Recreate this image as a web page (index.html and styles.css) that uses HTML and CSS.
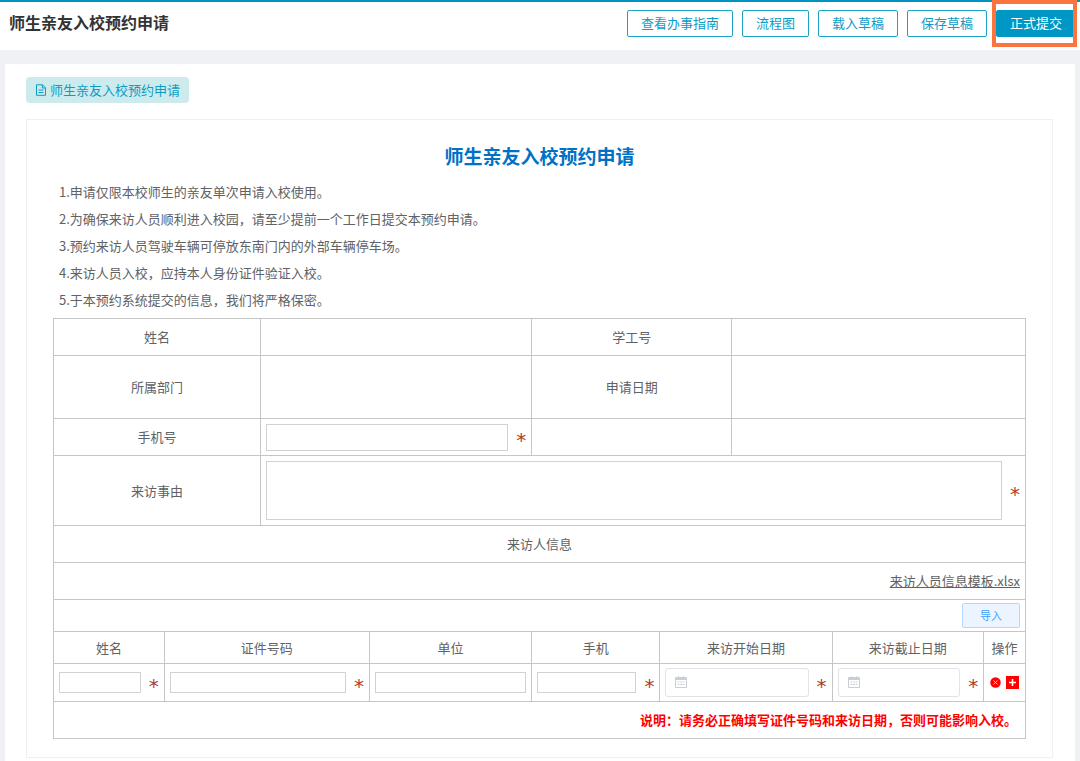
FILE: index.html
```html
<!DOCTYPE html>
<html lang="zh-CN">
<head>
<meta charset="utf-8">
<title>师生亲友入校预约申请</title>
<link rel="stylesheet" href="styles.css">
</head>
<body>
<svg class="defs" aria-hidden="true">
  <symbol id="calendar" viewBox="0 0 12 12">
    <path d="M.5 1.500h11v10h-11z" fill="none" stroke="currentColor"/>
    <path d="M.5 3h11" fill="none" stroke="currentColor" stroke-width="2"/>
    <path d="M3.500 .3v2M8.500 .3v2" fill="none" stroke="currentColor"/>
    <path d="M2.500 6h7M2.500 8.500h7" fill="none" stroke="currentColor" stroke-dasharray="1.800 .8"/>
  </symbol>
</svg>
<header class="topbar">
  <h1 class="topbar-title">师生亲友入校预约申请</h1>
  <div class="actions">
    <button class="btn" type="button">查看办事指南</button>
    <button class="btn" type="button">流程图</button>
    <button class="btn" type="button">载入草稿</button>
    <button class="btn" type="button">保存草稿</button>
    <div class="marked"><button class="btn primary" type="submit" form="apply">正式提交</button></div>
  </div>
</header>
<main class="card">
  <div class="tab">
    <svg class="tab-icon" viewBox="0 0 12 12" aria-hidden="true"><path d="M1.500 .8h6l3 3v7.500h-9zM7.300 .8v3.200h3.200M3.500 6h5M3.500 8.500h5" fill="none" stroke="currentColor"/></svg>
    <span>师生亲友入校预约申请</span>
  </div>
  <form class="panel" id="apply">
    <h2 class="form-title">师生亲友入校预约申请</h2>
    <div class="notes">
      <p>1.申请仅限本校师生的亲友单次申请入校使用。</p>
      <p>2.为确保来访人员顺利进入校园，请至少提前一个工作日提交本预约申请。</p>
      <p>3.预约来访人员驾驶车辆可停放东南门内的外部车辆停车场。</p>
      <p>4.来访人员入校，应持本人身份证件验证入校。</p>
      <p>5.于本预约系统提交的信息，我们将严格保密。</p>
    </div>
    <table class="grid info">
      <colgroup><col class="c-label"><col class="c-value"><col class="c-label2"><col></colgroup>
      <tr class="row"><th>姓名</th><td></td><th>学工号</th><td></td></tr>
      <tr class="row-dept"><th>所属部门</th><td></td><th>申请日期</th><td></td></tr>
      <tr class="row"><th><label for="phone">手机号</label></th><td><div class="field"><input class="input tall" id="phone" type="tel"><span class="star">*</span></div></td><td></td><td></td></tr>
      <tr class="row-reason"><th><label for="reason">来访事由</label></th><td colspan="3"><div class="field"><textarea class="input area" id="reason"></textarea><span class="star">*</span></div></td></tr>
      <tr class="row"><th colspan="4">来访人信息</th></tr>
      <tr class="row"><td colspan="4" class="right"><a class="file" href="#">来访人员信息模板.xlsx</a></td></tr>
    </table>
    <table class="grid visitors">
      <colgroup><col class="v-name"><col class="v-id"><col class="v-unit"><col class="v-phone"><col class="v-start"><col class="v-end"><col></colgroup>
      <tr class="row-import"><td colspan="7" class="right"><button class="import" type="button">导入</button></td></tr>
      <tr class="row-head"><th>姓名</th><th>证件号码</th><th>单位</th><th>手机</th><th>来访开始日期</th><th>来访截止日期</th><th class="ops-head">操作</th></tr>
      <tr class="row-entry">
        <td><div class="field"><input class="input" type="text" aria-label="姓名"><span class="star">*</span></div></td>
        <td><div class="field"><input class="input" type="text" aria-label="证件号码"><span class="star">*</span></div></td>
        <td><div class="field"><input class="input" type="text" aria-label="单位"></div></td>
        <td><div class="field"><input class="input" type="tel" aria-label="手机"><span class="star">*</span></div></td>
        <td><div class="field"><div class="date"><svg class="cal" aria-hidden="true"><use href="#calendar"/></svg><input class="date-input" type="text" aria-label="来访开始日期"></div><span class="star">*</span></div></td>
        <td><div class="field"><div class="date"><svg class="cal" aria-hidden="true"><use href="#calendar"/></svg><input class="date-input" type="text" aria-label="来访截止日期"></div><span class="star">*</span></div></td>
        <td><div class="ops">
          <button class="op" type="button" aria-label="删除"><svg class="op-del" viewBox="0 0 12 12"><circle cx="6" cy="6" r="5.700" fill="#f00"/><path d="M3.800 3.800l4.400 4.400M8.200 3.800l-4.400 4.400" stroke="#fff" stroke-width=".8"/></svg></button>
          <button class="op" type="button" aria-label="添加"><svg class="op-add" viewBox="0 0 13 13"><path d="M0 0h13v13H0z" fill="#f00"/><path d="M3 6.500h7M6.500 3v7" stroke="#fff" stroke-width="1.600"/></svg></button>
        </div></td>
      </tr>
      <tr class="row"><td colspan="7" class="right warning">说明：请务必正确填写证件号码和来访日期，否则可能影响入校。</td></tr>
    </table>
  </form>
</main>
</body>
</html>
```

FILE: styles.css
```css
* { box-sizing: border-box; }
body {
  margin: 0;
  min-height: 100vh;
  display: flex;
  flex-direction: column;
  background: #f0f1f4;
  color: #606266;
  font: 13px/20px "Noto Sans CJK SC", sans-serif;
}
button, input, textarea { font: inherit; margin: 0; }
.defs { display: none; }

.topbar {
  display: flex;
  justify-content: space-between;
  align-items: flex-start;
  height: 50px;
  padding: 8px 4px 0 9px;
  border-top: 2px solid #0093bf;
  background: #fff;
}
.topbar-title { margin: 0; font-size: 16px; line-height: 24px; color: #333; }
.actions { display: flex; gap: 9px; }
.btn {
  height: 27px;
  padding: 0 13px 2px;
  border: 1px solid #1ba3ca;
  border-radius: 2px;
  background: #fff;
  color: #0c9cc6;
  line-height: 22px;
  white-space: nowrap;
}
.btn.primary { background: #0097c4; border-color: #0097c4; color: #fff; }
.marked { position: relative; }
.marked::after {
  content: "";
  position: absolute;
  inset: -10px -1px -10px -4px;
  border: 4px solid #fb7440;
  pointer-events: none;
}

.card { flex: 1; margin: 14px 5px 0; padding: 13px 22px 4px 21px; background: #fff; }
.tab {
  display: inline-flex;
  align-items: center;
  gap: 3px;
  height: 26px;
  padding: 0 9px;
  border-radius: 4px;
  background: #cdebec;
  color: #0c9cc6;
  vertical-align: top;
}
.tab-icon { width: 12px; height: 12px; }

.panel { margin-top: 16px; padding: 22px 26px 18px; border: 1px solid #f0f0f2; }
.form-title { margin: 0; font-size: 19px; line-height: 28px; text-align: center; color: #0071c5; }
.notes { padding: 8px 6px 5px; }
.notes p { margin: 0; line-height: 27px; }

.grid { width: 100%; border-collapse: collapse; table-layout: fixed; }
.grid th, .grid td { padding: 0 5px; border: 1px solid #c6c6c6; font-weight: normal; text-align: center; }
.grid .right { text-align: right; }
.visitors { margin-top: -1px; }
.row { height: 37px; }
.row-dept { height: 63px; }
.row-reason { height: 70px; }
.row-import { height: 32px; }
.row-head { height: 32px; }
.row-entry { height: 38px; }
.c-label { width: 21.3%; }
.c-value { width: 27.9%; }
.c-label2 { width: 20.6%; }
.v-name { width: 11.4%; }
.v-id { width: 21.1%; }
.v-unit { width: 16.7%; }
.v-phone { width: 13.2%; }
.v-start { width: 17.7%; }
.v-end { width: 15.6%; }

.field { display: flex; align-items: center; gap: 8px; }
.input {
  flex: 1;
  min-width: 0;
  height: 21px;
  padding: 0 5px;
  border: 1px solid #d2d2d2;
  background: #fff;
}
.input.tall { height: 27px; }
.input.area { height: 59px; resize: none; }
.star {
  width: 10px;
  height: 20px;
  padding-top: 3px;
  font: 20px/20px "DejaVu Sans", sans-serif;
  color: #b23a2c;
}
.file { color: inherit; text-decoration: underline; }
.import {
  width: 58px;
  height: 25px;
  padding: 0 0 2px;
  border: 1px solid #b3d8ff;
  border-radius: 2px;
  background: #ecf5ff;
  color: #409eff;
  font-size: 11px;
  line-height: 20px;
  vertical-align: middle;
}
.date {
  flex: 1;
  min-width: 0;
  display: flex;
  align-items: center;
  gap: 6px;
  height: 29px;
  padding: 0 9px 2px;
  border: 1px solid #e0e3ea;
  border-radius: 3px;
}
.date-input { flex: 1; min-width: 0; padding: 0; border: 0; outline: 0; background: none; }
.cal { flex: none; width: 12px; height: 12px; color: #c9cdd5; }
.grid .ops-head { padding: 0; }
.ops { display: flex; justify-content: center; align-items: center; gap: 5px; }
.op { display: flex; padding: 0; border: 0; background: none; }
.op-del { width: 11px; height: 11px; }
.op-add { width: 13px; height: 13px; }
.grid .warning { padding-right: 8px; color: #f00; font-weight: bold; }
```
